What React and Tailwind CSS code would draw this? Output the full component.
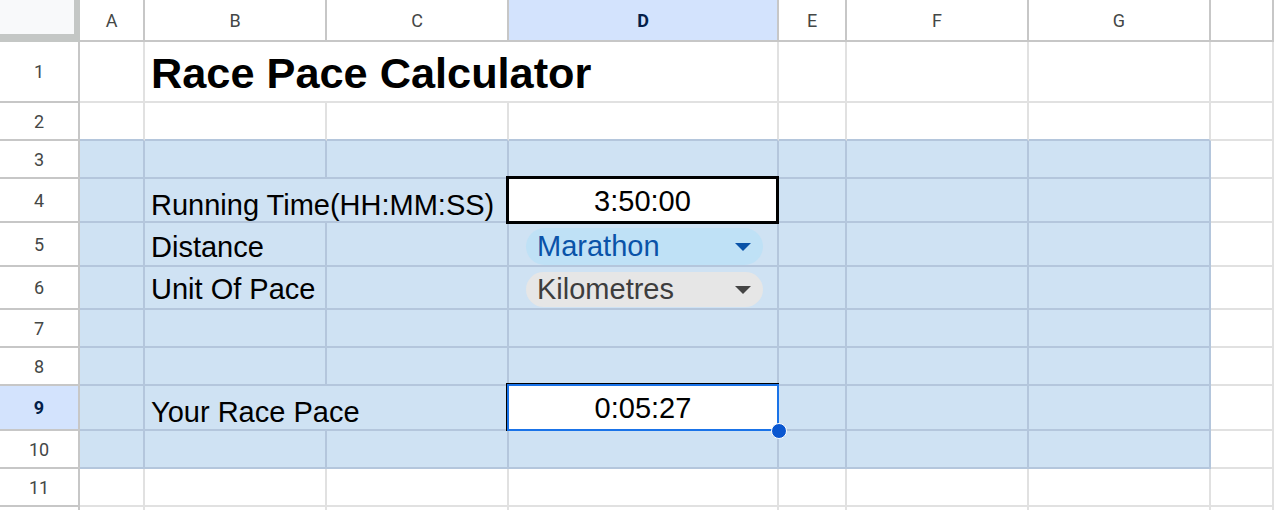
import React from "react";

const COLS = ["", "A", "B", "C", "D", "E", "F", "G", ""];
const NROWS = 12;

function isBlue(r, c) {
  return r >= 3 && r <= 10 && c >= 1 && c <= 7;
}

function Triangle({ color }) {
  return (
    <svg width="16" height="8" viewBox="0 0 16 8" className="shrink-0">
      <polygon points="0,0 16,0 8,8" fill={color} />
    </svg>
  );
}

function Chip({ label, variant }) {
  if (variant === "blue") {
    return (
      <div className="ml-[17px] mr-[14px] mt-[5px] h-[37px] flex-1 rounded-full bg-[#bfe1f6] flex items-center justify-between pl-[11px] pr-[12px]">
        <span className="text-[29px] leading-none text-[#0a53a8] font-['Liberation_Sans',Arial,sans-serif]">{label}</span>
        <Triangle color="#0a53a8" />
      </div>
    );
  }
  return (
    <div className="ml-[17px] mr-[14px] mt-[5px] h-[35px] flex-1 rounded-full bg-[#e6e6e6] flex items-center justify-between pl-[11px] pr-[12px]">
      <span className="text-[29px] leading-none text-[#3d3d3d] font-['Liberation_Sans',Arial,sans-serif]">{label}</span>
      <Triangle color="#444444" />
    </div>
  );
}

function dataContent(r, c) {
  if (r === 1 && c === 2)
    return (
      <span className="pl-[6px] pb-[6px] whitespace-nowrap text-[43.3px] font-bold leading-none text-black font-['Liberation_Sans',Arial,sans-serif]">
        Race Pace Calculator
      </span>
    );
  if (r === 4 && c === 2)
    return (
      <span className="pl-[6px] pb-[1px] whitespace-nowrap text-[29px] leading-none text-black font-['Liberation_Sans',Arial,sans-serif]">
        Running Time(HH:MM:SS)
      </span>
    );
  if (r === 5 && c === 2)
    return (
      <span className="pl-[6px] pb-[3px] whitespace-nowrap text-[29px] leading-none text-black font-['Liberation_Sans',Arial,sans-serif]">
        Distance
      </span>
    );
  if (r === 6 && c === 2)
    return (
      <span className="pl-[6px] pb-[4px] whitespace-nowrap text-[29px] leading-none text-black font-['Liberation_Sans',Arial,sans-serif]">
        Unit Of Pace
      </span>
    );
  if (r === 9 && c === 2)
    return (
      <span className="pl-[6px] pb-[2px] whitespace-nowrap text-[29px] leading-none text-black font-['Liberation_Sans',Arial,sans-serif]">
        Your Race Pace
      </span>
    );
  if (r === 4 && c === 4)
    return (
      <div className="absolute -left-[3px] -top-[3px] -right-[2px] -bottom-[3px] z-10 border-[3px] border-black bg-white flex items-center justify-center pt-[2px]">
        <span className="text-[29px] leading-none text-black font-['Liberation_Sans',Arial,sans-serif]">3:50:00</span>
      </div>
    );
  if (r === 5 && c === 4) return <Chip label="Marathon" variant="blue" />;
  if (r === 6 && c === 4) return <Chip label="Kilometres" variant="gray" />;
  if (r === 9 && c === 4)
    return (
      <>
        <div className="absolute -left-[3px] -top-[3px] -right-[2px] -bottom-[2px] z-10 border-t border-l border-black">
          <div className="h-full w-full border-2 border-[#1a73e8] bg-white flex items-center justify-center pt-[2px]">
            <span className="text-[29px] leading-none text-black font-['Liberation_Sans',Arial,sans-serif]">0:05:27</span>
          </div>
        </div>
        <div className="absolute -right-[10px] -bottom-[10px] z-20 w-[16px] h-[16px] rounded-full bg-[#0b57d0] border border-white" />
      </>
    );
  return null;
}

function spanOf(r, c) {
  if (r === 1 && c === 2) return 3;
  if ((r === 4 || r === 9) && c === 2) return 2;
  return 1;
}

export default function App() {
  const cells = [];

  cells.push(
    <div key="corner" className="bg-[#f8f9fa] border-r-[6px] border-b-[8px] border-[#c4c7c5]" />
  );
  for (let c = 1; c <= 8; c++) {
    const active = c === 4;
    cells.push(
      <div
        key={`h${c}`}
        className={
          "flex items-center justify-center border-r-2 border-b-2 border-[#c7c7c7] text-[18px] font-['Roboto',Arial,sans-serif] " +
          (active ? "bg-[#d3e3fd] font-bold text-[#041e49]" : "bg-white text-[#444746]")
        }
      >
        {COLS[c]}
      </div>
    );
  }

  for (let r = 1; r <= NROWS; r++) {
    const active = r === 9;
    cells.push(
      <div
        key={`rh${r}`}
        className={
          "flex items-center justify-center border-r-2 border-b-2 border-[#c7c7c7] text-[18px] font-['Roboto',Arial,sans-serif] " +
          (active ? "bg-[#d3e3fd] font-bold text-[#041e49]" : "bg-white text-[#444746]")
        }
      >
        {r <= 11 ? r : null}
      </div>
    );
    let c = 1;
    while (c <= 8) {
      const span = spanOf(r, c);
      const lastC = c + span - 1;
      const blue = isBlue(r, c);
      const bottomBlue = blue || (r === 2 && c >= 1 && c <= 7);
      const rightBlue = isBlue(r, lastC);
      const cls =
        "relative flex items-end border-r-2 border-b-2 " +
        (blue ? "bg-[#cfe2f3] " : "bg-white ") +
        (bottomBlue ? "border-b-[#b4c6dc] " : "border-b-[#e1e1e1] ") +
        (rightBlue ? "border-r-[#b4c6dc] " : "border-r-[#e1e1e1] ") +
        (span === 3 ? "col-span-3 " : span === 2 ? "col-span-2 " : "") +
        ((r === 5 || r === 6) && c === 4 ? "items-start " : "");
      cells.push(
        <div key={`c${r}-${c}`} className={cls}>
          {dataContent(r, c)}
        </div>
      );
      c += span;
    }
  }

  return (
    <div className="w-[1274px] h-[510px] overflow-hidden bg-white">
      <div className="grid grid-cols-[80px_65px_182px_182px_270px_68px_182px_182px_1fr] grid-rows-[42px_61px_38px_38px_44px_44px_43px_38px_38px_45px_38px_38px_38px]">
        {cells}
      </div>
    </div>
  );
}
